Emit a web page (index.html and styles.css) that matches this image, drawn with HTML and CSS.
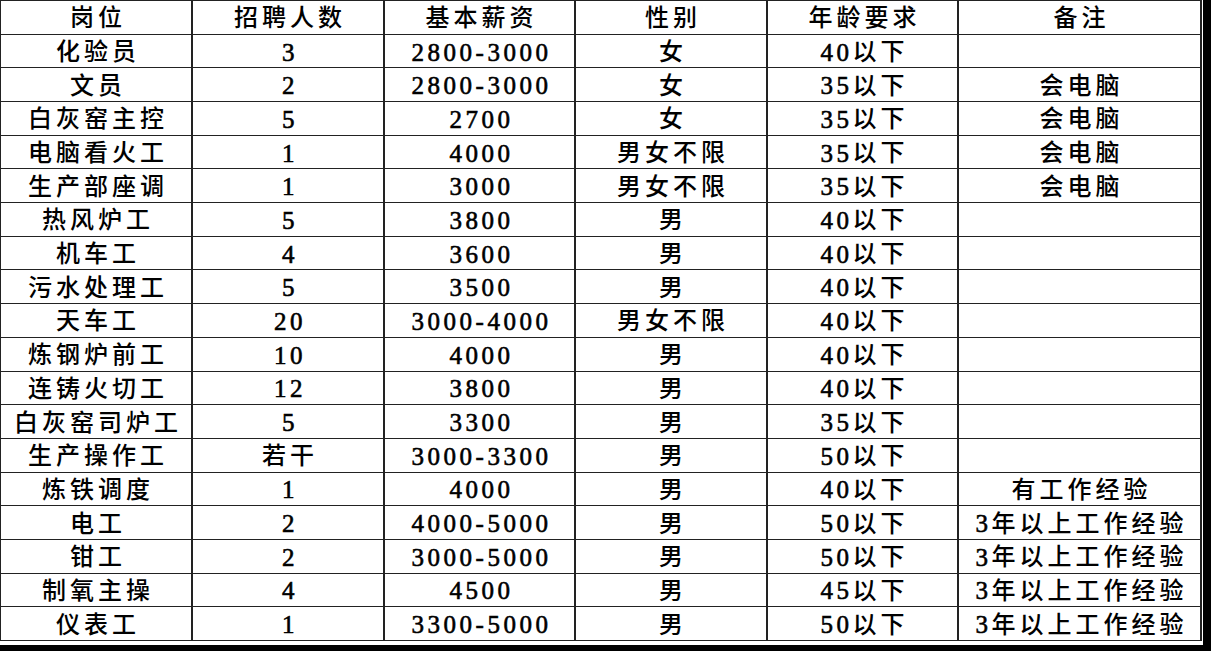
FILE: index.html
```html
<!DOCTYPE html>
<html lang="zh-CN">
<head>
<meta charset="utf-8">
<title>招聘岗位</title>
<link rel="stylesheet" href="styles.css">
</head>
<body>
<div class="frame">
  <div class="sheet">
    <div class="c">岗位</div><div class="c">招聘人数</div><div class="c">基本薪资</div><div class="c">性别</div><div class="c">年龄要求</div><div class="c">备注</div>
    <div class="c">化验员</div><div class="c"><span class="n">3</span></div><div class="c"><span class="n">2800-3000</span></div><div class="c">女</div><div class="c"><span class="n">40</span>以下</div><div class="c"></div>
    <div class="c">文员</div><div class="c"><span class="n">2</span></div><div class="c"><span class="n">2800-3000</span></div><div class="c">女</div><div class="c"><span class="n">35</span>以下</div><div class="c">会电脑</div>
    <div class="c">白灰窑主控</div><div class="c"><span class="n">5</span></div><div class="c"><span class="n">2700</span></div><div class="c">女</div><div class="c"><span class="n">35</span>以下</div><div class="c">会电脑</div>
    <div class="c">电脑看火工</div><div class="c"><span class="n">1</span></div><div class="c"><span class="n">4000</span></div><div class="c">男女不限</div><div class="c"><span class="n">35</span>以下</div><div class="c">会电脑</div>
    <div class="c">生产部座调</div><div class="c"><span class="n">1</span></div><div class="c"><span class="n">3000</span></div><div class="c">男女不限</div><div class="c"><span class="n">35</span>以下</div><div class="c">会电脑</div>
    <div class="c">热风炉工</div><div class="c"><span class="n">5</span></div><div class="c"><span class="n">3800</span></div><div class="c">男</div><div class="c"><span class="n">40</span>以下</div><div class="c"></div>
    <div class="c">机车工</div><div class="c"><span class="n">4</span></div><div class="c"><span class="n">3600</span></div><div class="c">男</div><div class="c"><span class="n">40</span>以下</div><div class="c"></div>
    <div class="c">污水处理工</div><div class="c"><span class="n">5</span></div><div class="c"><span class="n">3500</span></div><div class="c">男</div><div class="c"><span class="n">40</span>以下</div><div class="c"></div>
    <div class="c">天车工</div><div class="c"><span class="n">20</span></div><div class="c"><span class="n">3000-4000</span></div><div class="c">男女不限</div><div class="c"><span class="n">40</span>以下</div><div class="c"></div>
    <div class="c">炼钢炉前工</div><div class="c"><span class="n">10</span></div><div class="c"><span class="n">4000</span></div><div class="c">男</div><div class="c"><span class="n">40</span>以下</div><div class="c"></div>
    <div class="c">连铸火切工</div><div class="c"><span class="n">12</span></div><div class="c"><span class="n">3800</span></div><div class="c">男</div><div class="c"><span class="n">40</span>以下</div><div class="c"></div>
    <div class="c">白灰窑司炉工</div><div class="c"><span class="n">5</span></div><div class="c"><span class="n">3300</span></div><div class="c">男</div><div class="c"><span class="n">35</span>以下</div><div class="c"></div>
    <div class="c">生产操作工</div><div class="c">若干</div><div class="c"><span class="n">3000-3300</span></div><div class="c">男</div><div class="c"><span class="n">50</span>以下</div><div class="c"></div>
    <div class="c">炼铁调度</div><div class="c"><span class="n">1</span></div><div class="c"><span class="n">4000</span></div><div class="c">男</div><div class="c"><span class="n">40</span>以下</div><div class="c">有工作经验</div>
    <div class="c">电工</div><div class="c"><span class="n">2</span></div><div class="c"><span class="n">4000-5000</span></div><div class="c">男</div><div class="c"><span class="n">50</span>以下</div><div class="c"><span class="n">3</span>年以上工作经验</div>
    <div class="c">钳工</div><div class="c"><span class="n">2</span></div><div class="c"><span class="n">3000-5000</span></div><div class="c">男</div><div class="c"><span class="n">50</span>以下</div><div class="c"><span class="n">3</span>年以上工作经验</div>
    <div class="c">制氧主操</div><div class="c"><span class="n">4</span></div><div class="c"><span class="n">4500</span></div><div class="c">男</div><div class="c"><span class="n">45</span>以下</div><div class="c"><span class="n">3</span>年以上工作经验</div>
    <div class="c">仪表工</div><div class="c"><span class="n">1</span></div><div class="c"><span class="n">3300-5000</span></div><div class="c">男</div><div class="c"><span class="n">50</span>以下</div><div class="c"><span class="n">3</span>年以上工作经验</div>
  </div>
</div>
</body>
</html>
```
FILE: styles.css
```css
html, body {
  margin: 0;
  padding: 0;
  background: #fff;
}
.frame {
  width: 1211px;
  height: 651px;
  box-sizing: border-box;
  padding-right: 1px;
  padding-bottom: 4px;
  border-right: 8px solid #000;
  border-bottom: 6px solid #000;
}
.sheet {
  display: grid;
  grid-template-columns: 192px 192px 191px 192px 191px 243px;
  grid-template-rows: repeat(19, 1fr);
  height: 641px;
  box-sizing: border-box;
  border-left: 1px solid #222;
  border-top: 1px solid #222;
  font-family: "Liberation Serif", "Noto Sans CJK SC", serif;
  font-weight: 500;
  font-size: 24px;
  letter-spacing: 4px;
  color: #000;
}
.c {
  box-sizing: border-box;
  border-right: 2px solid #222;
  border-bottom: 1px solid #222;
  display: flex;
  align-items: center;
  justify-content: center;
  padding-left: 4px;
  padding-top: 2px;
  white-space: nowrap;
  line-height: 1;
}
.n {
  font-family: "Liberation Serif", serif;
  font-weight: 400;
  font-size: 25px;
  letter-spacing: 3.5px;
  -webkit-text-stroke: 0.6px #000;
}
```
